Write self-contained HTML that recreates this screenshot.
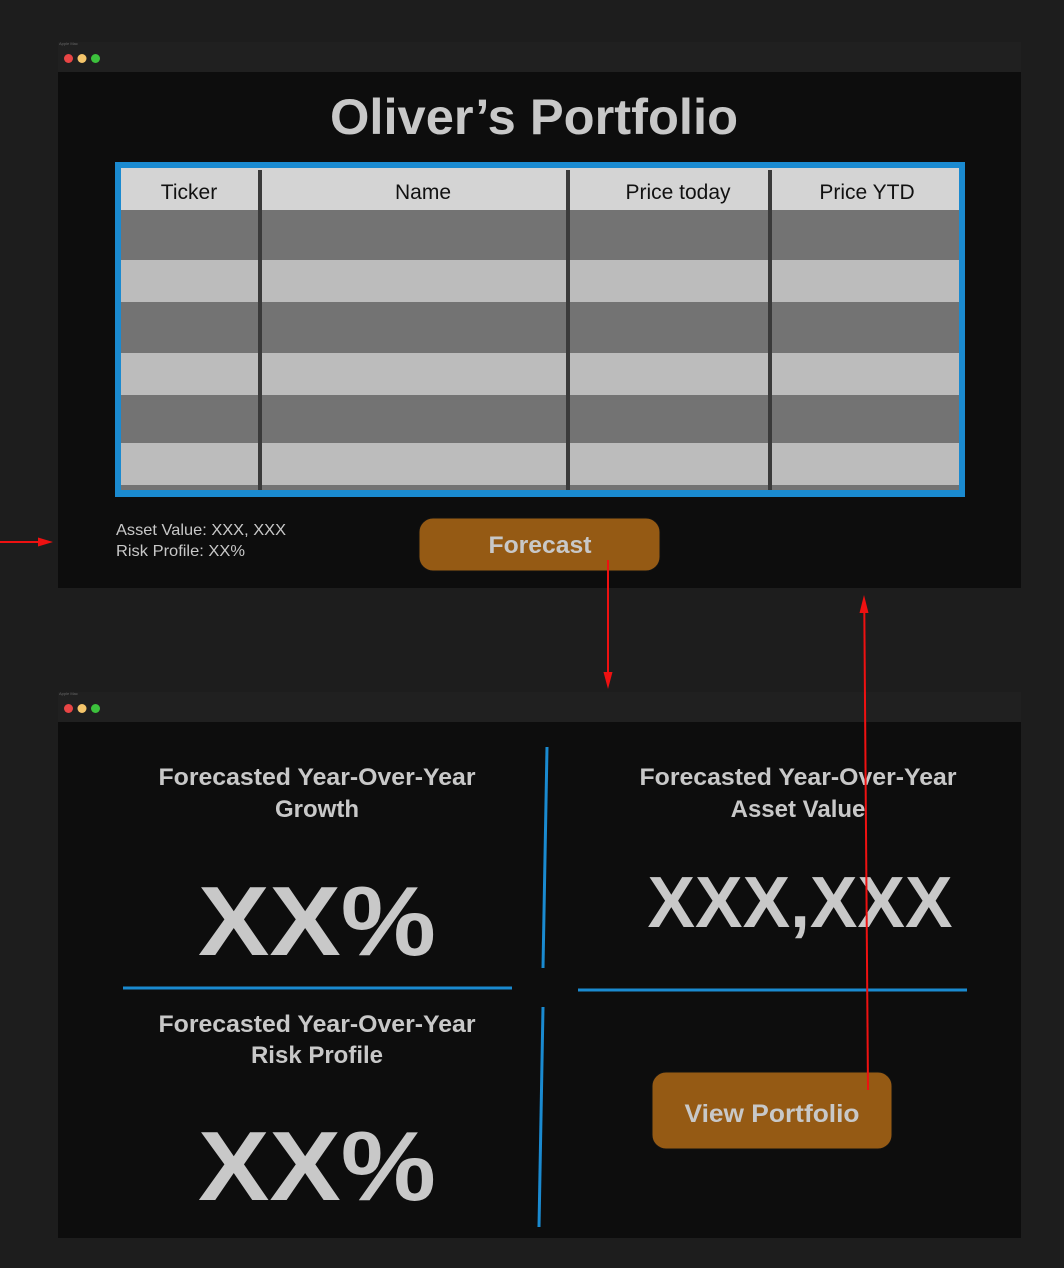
<!DOCTYPE html>
<html><head><meta charset="utf-8"><style>
html,body{margin:0;padding:0;background:#1d1d1d;}
svg{display:block}
text{font-family:"Liberation Sans","DejaVu Sans",sans-serif;fill:#c8c8c8}
</style></head><body>
<svg width="1064" height="1268" viewBox="0 0 1064 1268" xmlns="http://www.w3.org/2000/svg">
<rect width="1064" height="1268" fill="#1d1d1d"/>
<rect x="58" y="42" width="963" height="30" fill="#202020"/>
<text x="59" y="45" font-size="4" style="fill:#666">Apple Mac</text>
<circle cx="68.5" cy="58.5" r="4.5" fill="#e84545"/>
<circle cx="82" cy="58.5" r="4.5" fill="#f5c56b"/>
<circle cx="95.5" cy="58.5" r="4.5" fill="#3cc13c"/>
<rect x="58" y="72" width="963" height="516" fill="#0d0d0d"/>
<text x="534" y="134" font-size="50" font-weight="bold" text-anchor="middle" textLength="408" lengthAdjust="spacingAndGlyphs">Oliver’s Portfolio</text>
<rect x="115" y="162" width="850" height="335" fill="#1a8ad0"/>
<rect x="121" y="168" width="838" height="322" fill="#bcbcbc"/>
<rect x="121" y="168" width="838" height="42" fill="#d4d4d4"/>
<rect x="121" y="210" width="838" height="50" fill="#737373"/>
<rect x="121" y="302" width="838" height="51" fill="#737373"/>
<rect x="121" y="395" width="838" height="48" fill="#737373"/>
<rect x="121" y="485" width="838" height="5" fill="#737373"/>
<rect x="258" y="170" width="4" height="320" fill="#3a3a3a"/>
<rect x="566" y="170" width="4" height="320" fill="#3a3a3a"/>
<rect x="768" y="170" width="4" height="320" fill="#3a3a3a"/>
<g font-size="21" text-anchor="middle">
<text x="189" y="199" style="fill:#111">Ticker</text>
<text x="423" y="199" style="fill:#111">Name</text>
<text x="678" y="199" style="fill:#111">Price today</text>
<text x="867" y="199" style="fill:#111">Price YTD</text>
</g>
<text x="116" y="535" font-size="16" textLength="170" lengthAdjust="spacingAndGlyphs">Asset Value: XXX, XXX</text>
<text x="116" y="556" font-size="16" textLength="129" lengthAdjust="spacingAndGlyphs">Risk Profile: XX%</text>
<rect x="419" y="518" width="241" height="53" rx="14" fill="#955a14" stroke="#111" stroke-width="1"/>
<text x="540" y="553" font-size="24" font-weight="bold" text-anchor="middle" textLength="103" lengthAdjust="spacingAndGlyphs">Forecast</text>
<rect x="58" y="692" width="963" height="30" fill="#202020"/>
<text x="59" y="695" font-size="4" style="fill:#666">Apple Mac</text>
<circle cx="68.5" cy="708.5" r="4.5" fill="#e84545"/>
<circle cx="82" cy="708.5" r="4.5" fill="#f5c56b"/>
<circle cx="95.5" cy="708.5" r="4.5" fill="#3cc13c"/>
<rect x="58" y="722" width="963" height="516" fill="#0d0d0d"/>
<g font-size="24" font-weight="bold" text-anchor="middle">
<text x="317" y="785" textLength="317" lengthAdjust="spacingAndGlyphs">Forecasted Year-Over-Year</text>
<text x="317" y="817">Growth</text>
<text x="798" y="785" textLength="317" lengthAdjust="spacingAndGlyphs">Forecasted Year-Over-Year</text>
<text x="798" y="817">Asset Value</text>
<text x="317" y="1032" textLength="317" lengthAdjust="spacingAndGlyphs">Forecasted Year-Over-Year</text>
<text x="317" y="1063">Risk Profile</text>
</g>
<g font-weight="bold" text-anchor="middle">
<text x="317" y="955" font-size="98" textLength="238" lengthAdjust="spacingAndGlyphs">XX%</text>
<text x="317" y="1200" font-size="98" textLength="238" lengthAdjust="spacingAndGlyphs">XX%</text>
<text x="800" y="927" font-size="72" textLength="305" lengthAdjust="spacingAndGlyphs">XXX,XXX</text>
</g>
<g stroke="#1a8ad0" stroke-width="3">
<line x1="547" y1="747" x2="543" y2="968"/>
<line x1="543" y1="1007" x2="539" y2="1227"/>
<line x1="123" y1="988" x2="512" y2="988"/>
<line x1="578" y1="990" x2="967" y2="990"/>
</g>
<rect x="652" y="1072" width="240" height="77" rx="14" fill="#955a14" stroke="#111" stroke-width="1"/>
<text x="772" y="1122" font-size="25" font-weight="bold" text-anchor="middle" textLength="175" lengthAdjust="spacingAndGlyphs">View Portfolio</text>
<g stroke="#ee1111" stroke-width="2" fill="#ee1111">
<line x1="0" y1="542" x2="40" y2="542"/>
<polygon points="38,537.5 53,542 38,546.5" stroke="none"/>
<line x1="608" y1="560" x2="608" y2="675"/>
<polygon points="603.5,672 608,689 612.5,672" stroke="none"/>
<line x1="868" y1="1090" x2="864.3" y2="610"/>
<polygon points="859.5,613 864,595 868.5,613" stroke="none"/>
</g>
</svg>
</body></html>
